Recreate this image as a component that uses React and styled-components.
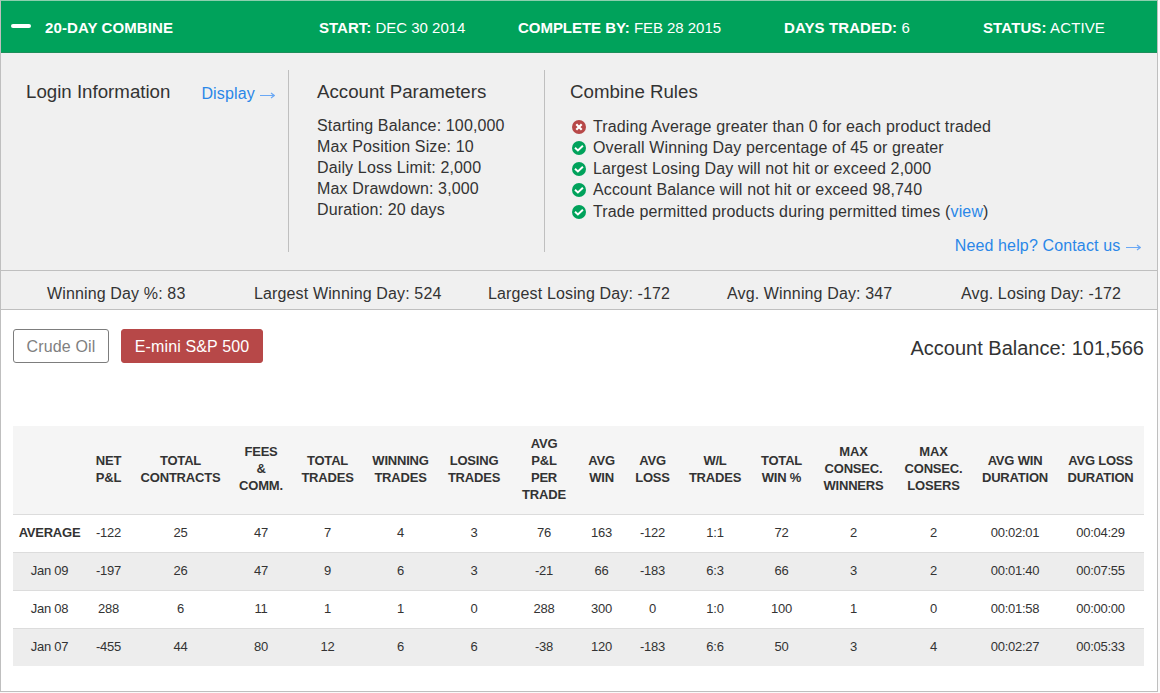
import React from "react";
import styled, { createGlobalStyle } from "styled-components";

const GlobalStyle = createGlobalStyle`
  *, *::before, *::after { box-sizing: border-box; }
  body {
    margin: 0;
    background: #fafafa;
    color: #333;
    font-family: "Liberation Sans", Arial, sans-serif;
    font-size: 16px;
    line-height: 21px;
  }
`;

const Panel = styled.div`
  width: 1158px;
  height: 692px;
  border: 1px solid #bfbfbf;
  border-top-color: #8ccfae;
  background: #fff;
`;

const Header = styled.header`
  display: flex;
  height: 52px;
  padding-left: 10px;
  background: #00a25b;
  border-bottom: 1px solid #1c8f5b;
  color: #fff;
  font-size: 15px;
  line-height: 54px;
  white-space: nowrap;
`;

const Collapse = styled.span`
  width: 20px;
  height: 4px;
  margin: 23px 14px 0 0;
  border-radius: 2px;
  background: #fff;
`;

const HeaderItem = styled.span`
  width: ${(p) => p.$width}px;
  letter-spacing: ${(p) => p.$spacing || 0}px;
`;

const Info = styled.section`
  display: flex;
  height: 217px;
  padding: 17px 0 18px;
  background: #f0f0f0;
  letter-spacing: 0.14px;
`;

const Column = styled.div`
  display: flex;
  flex-direction: ${(p) => (p.$row ? "row" : "column")};
  width: ${(p) => p.$width}px;
  padding: 11px 0 0 ${(p) => p.$pad}px;
  border-right: ${(p) => (p.$last ? "0" : "1px solid #bfbfbf")};
`;

const Title = styled.h2`
  margin: 0;
  font-size: 18.7px;
  font-weight: 400;
  letter-spacing: 0;
  line-height: 21px;
  white-space: nowrap;
`;

const Link = styled.a`
  color: #2a87e8;
  white-space: nowrap;
`;

const DisplayLink = styled(Link)`
  margin: 2px 0 0 31px;
`;

const HelpLink = styled(Link)`
  align-self: flex-end;
  margin: 13px 16px 0 0;
`;

const ArrowSvg = styled.svg`
  margin-left: 1px;
  vertical-align: -1px;
`;

const Arrow = () => (
  <ArrowSvg width="15" height="9" viewBox="0 0 15 9" fill="none" stroke="#6aa8f5">
    <path d="M0 4.5H14" />
    <path d="M11 2L14.3 4.5L11 7" strokeWidth="1.2" />
  </ArrowSvg>
);

const List = styled.ul`
  margin: ${(p) => p.$top}px 0 0;
  padding: 0;
  list-style: none;
  white-space: nowrap;
`;

const Rule = styled.li`
  display: flex;
  align-items: center;
  gap: 7px;
  height: 21px;
  padding-left: 2px;
  &:last-child { margin-top: 1px; }
  svg { flex: none; margin-top: 1px; }
`;

const StatusIcon = ({ failed }) => (
  <svg width="14" height="14" viewBox="0 0 14 14" fill="none">
    <circle cx="7" cy="7" r="7" fill={failed ? "#b74848" : "#00a25b"} />
    {failed ? (
      <path d="M4.3 4.3L9.7 9.7M9.7 4.3L4.3 9.7" stroke="#fff" strokeWidth="2.2" />
    ) : (
      <path d="M3 6.8L5.9 9.4L10.9 4.8" stroke="#fff" strokeWidth="2" />
    )}
  </svg>
);

const Stats = styled.section`
  display: flex;
  height: 40px;
  padding: 2px 0 0 46px;
  border: solid #bfbfbf;
  border-width: 1px 0;
  background: #f0f0f0;
  letter-spacing: 0.14px;
  line-height: 41px;
  white-space: nowrap;
`;

const Stat = styled.span`
  width: ${(p) => p.$width}px;
`;

const Toolbar = styled.div`
  display: flex;
  gap: 12px;
  height: 116px;
  padding: 19px 13px 0 12px;
`;

const Tab = styled.button`
  width: ${(p) => p.$width}px;
  height: 34px;
  padding: 1px 0 0;
  border: 1px solid ${(p) => (p.$active ? "#b74848" : "#7d7d7d")};
  border-radius: 3px;
  background: ${(p) => (p.$active ? "#b74848" : "#fff")};
  color: ${(p) => (p.$active ? "#fff" : "#808080")};
  font: 16px/32px "Liberation Sans", Arial, sans-serif;
  letter-spacing: 0.14px;
  white-space: nowrap;
`;

const Balance = styled.div`
  margin-left: auto;
  font-size: 20px;
  line-height: 38px;
`;

const Table = styled.table`
  width: 1131px;
  margin-left: 12px;
  border-collapse: separate;
  border-spacing: 0;
  table-layout: fixed;
  font-size: 13px;
  line-height: 17px;
  text-align: center;
  white-space: pre;
`;

const Col = styled.col`
  width: ${(p) => p.$width}px;
`;

const HeadCell = styled.th`
  height: 88px;
  padding: 8.6px 0 11.4px;
  background: #f5f5f5;
  font-weight: 700;
  letter-spacing: -0.2px;
`;

const Row = styled.tr`
  background: ${(p) => (p.$shaded ? "#ededed" : "#fff")};
`;

const Cell = styled.td`
  height: 38px;
  padding: 9px 0 11px;
  border-top: 1px solid #dcdcdc;
  letter-spacing: -0.24px;
  font-weight: ${(p) => (p.$bold ? 700 : 400)};
`;

const WIDTHS = [73, 45, 99, 62, 71, 75, 72, 68, 47, 55, 70, 63, 81, 79, 84, 87];
const HEADINGS = [
  "", "NET\nP&L", "TOTAL\nCONTRACTS", "FEES\n&\nCOMM.", "TOTAL\nTRADES",
  "WINNING\nTRADES", "LOSING\nTRADES", "AVG\nP&L\nPER\nTRADE", "AVG\nWIN",
  "AVG\nLOSS", "W/L\nTRADES", "TOTAL\nWIN %", "MAX\nCONSEC.\nWINNERS",
  "MAX\nCONSEC.\nLOSERS", "AVG WIN\nDURATION", "AVG LOSS\nDURATION",
];
const ROWS = [
  ["AVERAGE", "-122", "25", "47", "7", "4", "3", "76", "163", "-122", "1:1", "72", "2", "2", "00:02:01", "00:04:29"],
  ["Jan 09", "-197", "26", "47", "9", "6", "3", "-21", "66", "-183", "6:3", "66", "3", "2", "00:01:40", "00:07:55"],
  ["Jan 08", "288", "6", "11", "1", "1", "0", "288", "300", "0", "1:0", "100", "1", "0", "00:01:58", "00:00:00"],
  ["Jan 07", "-455", "44", "80", "12", "6", "6", "-38", "120", "-183", "6:6", "50", "3", "4", "00:02:27", "00:05:33"],
];
const PARAMETERS = [
  "Starting Balance: 100,000", "Max Position Size: 10", "Daily Loss Limit: 2,000",
  "Max Drawdown: 3,000", "Duration: 20 days",
];
const RULES = [
  "Trading Average greater than 0 for each product traded",
  "Overall Winning Day percentage of 45 or greater",
  "Largest Losing Day will not hit or exceed 2,000",
  "Account Balance will not hit or exceed 98,740",
];

export default function App() {
  return (
    <>
      <GlobalStyle />
      <Panel>
        <Header>
          <Collapse />
          <HeaderItem $width={274} $spacing={0.1}><b>20-DAY COMBINE</b></HeaderItem>
          <HeaderItem $width={199}><b>START:</b> DEC 30 2014</HeaderItem>
          <HeaderItem $width={266} $spacing={-0.04}><b>COMPLETE BY:</b> FEB 28 2015</HeaderItem>
          <HeaderItem $width={199} $spacing={0.1}><b>DAYS TRADED:</b> 6</HeaderItem>
          <HeaderItem $width={140} $spacing={0.12}><b>STATUS:</b> ACTIVE</HeaderItem>
        </Header>
        <Info>
          <Column $row $width={288} $pad={25}>
            <Title>Login Information</Title>
            <DisplayLink>Display <Arrow /></DisplayLink>
          </Column>
          <Column $width={256} $pad={28}>
            <Title>Account Parameters</Title>
            <List $top={13}>
              {PARAMETERS.map((text) => <li key={text}>{text}</li>)}
            </List>
          </Column>
          <Column $last $width={612} $pad={25}>
            <Title>Combine Rules</Title>
            <List $top={14}>
              {RULES.map((text, i) => (
                <Rule key={text}><StatusIcon failed={i === 0} />{text}</Rule>
              ))}
              <Rule>
                <StatusIcon />
                <span>Trade permitted products during permitted times (<Link>view</Link>)</span>
              </Rule>
            </List>
            <HelpLink>Need help? Contact us <Arrow /></HelpLink>
          </Column>
        </Info>
        <Stats>
          <Stat $width={207}>Winning Day %: 83</Stat>
          <Stat $width={234}>Largest Winning Day: 524</Stat>
          <Stat $width={239}>Largest Losing Day: -172</Stat>
          <Stat $width={234}>Avg. Winning Day: 347</Stat>
          <Stat $width={180}>Avg. Losing Day: -172</Stat>
        </Stats>
        <Toolbar>
          <Tab $width={96}>Crude Oil</Tab>
          <Tab $width={142} $active>E-mini S&amp;P 500</Tab>
          <Balance>Account Balance: 101,566</Balance>
        </Toolbar>
        <Table>
          <colgroup>
            {WIDTHS.map((w, i) => <Col key={i} $width={w} />)}
          </colgroup>
          <thead>
            <tr>{HEADINGS.map((h, i) => <HeadCell key={i}>{h}</HeadCell>)}</tr>
          </thead>
          <tbody>
            {ROWS.map((row, r) => (
              <Row key={row[0]} $shaded={r % 2 === 1}>
                {row.map((value, i) => <Cell key={i} $bold={r === 0 && i === 0}>{value}</Cell>)}
              </Row>
            ))}
          </tbody>
        </Table>
      </Panel>
    </>
  );
}
